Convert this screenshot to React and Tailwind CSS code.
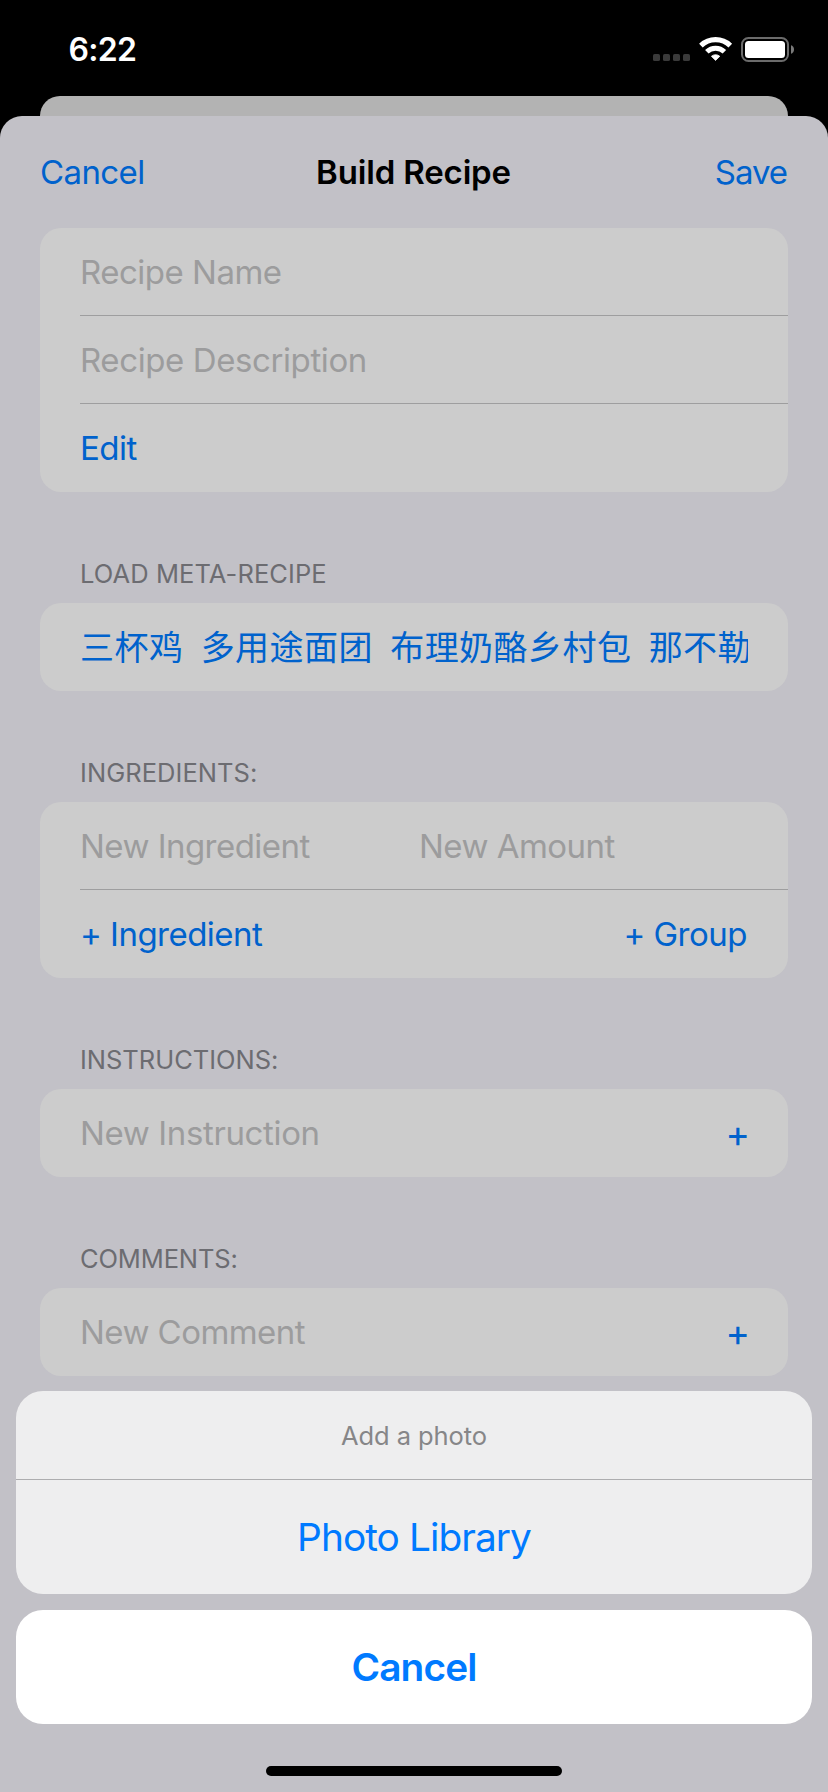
import React from "react";

const META_RECIPES = ["三杯鸡", "多用途面团", "布理奶酪乡村包", "那不勒"];

function StatusBar() {
  return (
    <div className="flex h-24 items-start justify-between pr-[34px] pl-[68.5px] text-white">
      <span className="mt-[30px] text-[32px] leading-[40px] font-semibold tracking-[-0.7px]">6:22</span>
      <svg className="mt-[34px]" width="142" height="30" viewBox="652 34 142 30" fill="none">
        <g fill="#3a3a3a">
          <rect x="653" y="54" width="7" height="7" rx="1.6" />
          <rect x="663" y="54" width="7" height="7" rx="1.6" />
          <rect x="673" y="54" width="7" height="7" rx="1.6" />
          <rect x="683" y="54" width="7" height="7" rx="1.6" />
        </g>
        <g transform="translate(715.6 61)">
          <path d="M-14.7 -15.4A21.3 21.3 0 0 1 14.7 -15.4" stroke="#fff" strokeWidth="5.2" />
          <path d="M-8.8 -9.2A12.7 12.7 0 0 1 8.8 -9.2" stroke="#fff" strokeWidth="5" />
          <path d="M0 -0.6L-4.2 -4.7A6.3 6.3 0 0 1 4.2 -4.7Z" fill="#fff" stroke="#fff" strokeWidth="0.8" strokeLinejoin="round" />
        </g>
        <rect x="742" y="38" width="46" height="23" rx="6.5" stroke="#6b6b6b" strokeWidth="2" />
        <rect x="745" y="41" width="40" height="17" rx="3.5" fill="#fff" />
        <path d="M791 45.2C792.8 45.6 794 47.4 794 49.5S792.8 53.4 791 53.8Z" fill="#7a7a7a" />
      </svg>
    </div>
  );
}

function Card({ children }) {
  return <div className="rounded-[21px] bg-[#cccccc] text-[33px] leading-[40px]">{children}</div>;
}

function Row({ children, divider = false }) {
  return (
    <div className="flex h-[88px] flex-col pl-10">
      <div className="flex flex-1 items-center pr-10">{children}</div>
      {divider && <div className="h-px bg-[#9e9e9f]" />}
    </div>
  );
}

function SectionHeader({ children }) {
  return (
    <h2 className="h-[111px] pt-[67px] pl-10 text-[25.5px] leading-[30px] text-[#6c6c71]">{children}</h2>
  );
}

function ActionSheet() {
  return (
    <div className="absolute inset-x-4 bottom-4 flex flex-col items-center text-[#007aff]">
      <div className="w-full overflow-hidden rounded-[27px] bg-[#eeeeef] text-center">
        <p className="flex h-[88px] items-center justify-center pt-0.5 text-[25.5px] tracking-[-0.06px] text-[#868688]">
          Add a photo
        </p>
        <div className="h-px bg-[#adadaf]" />
        <button className="block h-[114px] w-full text-[38.8px] tracking-[-0.93px]">Photo Library</button>
      </div>
      <button className="mt-4 h-[114px] w-full rounded-[27px] bg-white text-[38.8px] font-semibold tracking-[-0.89px]">
        Cancel
      </button>
      <div className="mt-[42px] h-[10px] w-[296px] rounded-full bg-black" />
    </div>
  );
}

export default function App() {
  return (
    <div className="relative flex h-[1792px] w-[828px] flex-col overflow-hidden bg-black font-[Inter,'Noto_Sans_CJK_SC',sans-serif]">
      <StatusBar />
      <div className="mx-10 h-5 rounded-t-[20px] bg-[#b3b3b3]" />
      <main className="flex-1 rounded-t-[22px] bg-[#c2c1c7] px-10">
        <header className="flex h-28 items-center text-[33px] leading-[40px] text-[#0062cc]">
          <button className="flex-1 text-left tracking-[-0.6px]">Cancel</button>
          <h1 className="font-semibold tracking-[-0.16px] text-black">Build Recipe</h1>
          <button className="flex-1 pr-px text-right tracking-[-1.04px]">Save</button>
        </header>

        <Card>
          <Row divider>
            <span className="tracking-[-0.5px] text-[#9c9c9d]">Recipe Name</span>
          </Row>
          <Row divider>
            <span className="tracking-[-0.4px] text-[#9c9c9d]">Recipe Description</span>
          </Row>
          <Row>
            <button className="tracking-[-0.5px] text-[#0062cc]">Edit</button>
          </Row>
        </Card>

        <SectionHeader>
          <span className="tracking-[0.08px]">LOAD META-RECIPE</span>
        </SectionHeader>
        <Card>
          <Row>
            <div className="flex flex-1 gap-[17.3px] overflow-hidden pb-0.5 font-['Noto_Sans_CJK_SC',sans-serif] text-[34px] leading-[60px] tracking-[0.45px] whitespace-nowrap text-[#0062cc]">
              {META_RECIPES.map((name) => (
                <button key={name} className="shrink-0">
                  {name}
                </button>
              ))}
            </div>
          </Row>
        </Card>

        <SectionHeader>
          <span className="tracking-[0.05px]">INGREDIENTS:</span>
        </SectionHeader>
        <Card>
          <Row divider>
            <span className="w-[339px] tracking-[-0.54px] text-[#9c9c9d]">New Ingredient</span>
            <span className="tracking-[-0.52px] text-[#9c9c9d]">New Amount</span>
          </Row>
          <Row>
            <button className="flex-1 text-left tracking-[-0.52px] text-[#0062cc]">+ Ingredient</button>
            <button className="mr-px tracking-[-0.5px] text-[#0062cc]">+ Group</button>
          </Row>
        </Card>

        <SectionHeader>
          <span className="tracking-[-0.02px]">INSTRUCTIONS:</span>
        </SectionHeader>
        <Card>
          <Row>
            <span className="flex-1 tracking-[-0.37px] text-[#9c9c9d]">New Instruction</span>
            <button className="-mr-0.5 pt-px text-[37px] text-[#0062cc]">+</button>
          </Row>
        </Card>

        <SectionHeader>
          <span className="tracking-[-0.13px]">COMMENTS:</span>
        </SectionHeader>
        <Card>
          <Row>
            <span className="flex-1 tracking-[-0.55px] text-[#9c9c9d]">New Comment</span>
            <button className="-mr-0.5 pt-px text-[37px] text-[#0062cc]">+</button>
          </Row>
        </Card>
      </main>
      <ActionSheet />
    </div>
  );
}
